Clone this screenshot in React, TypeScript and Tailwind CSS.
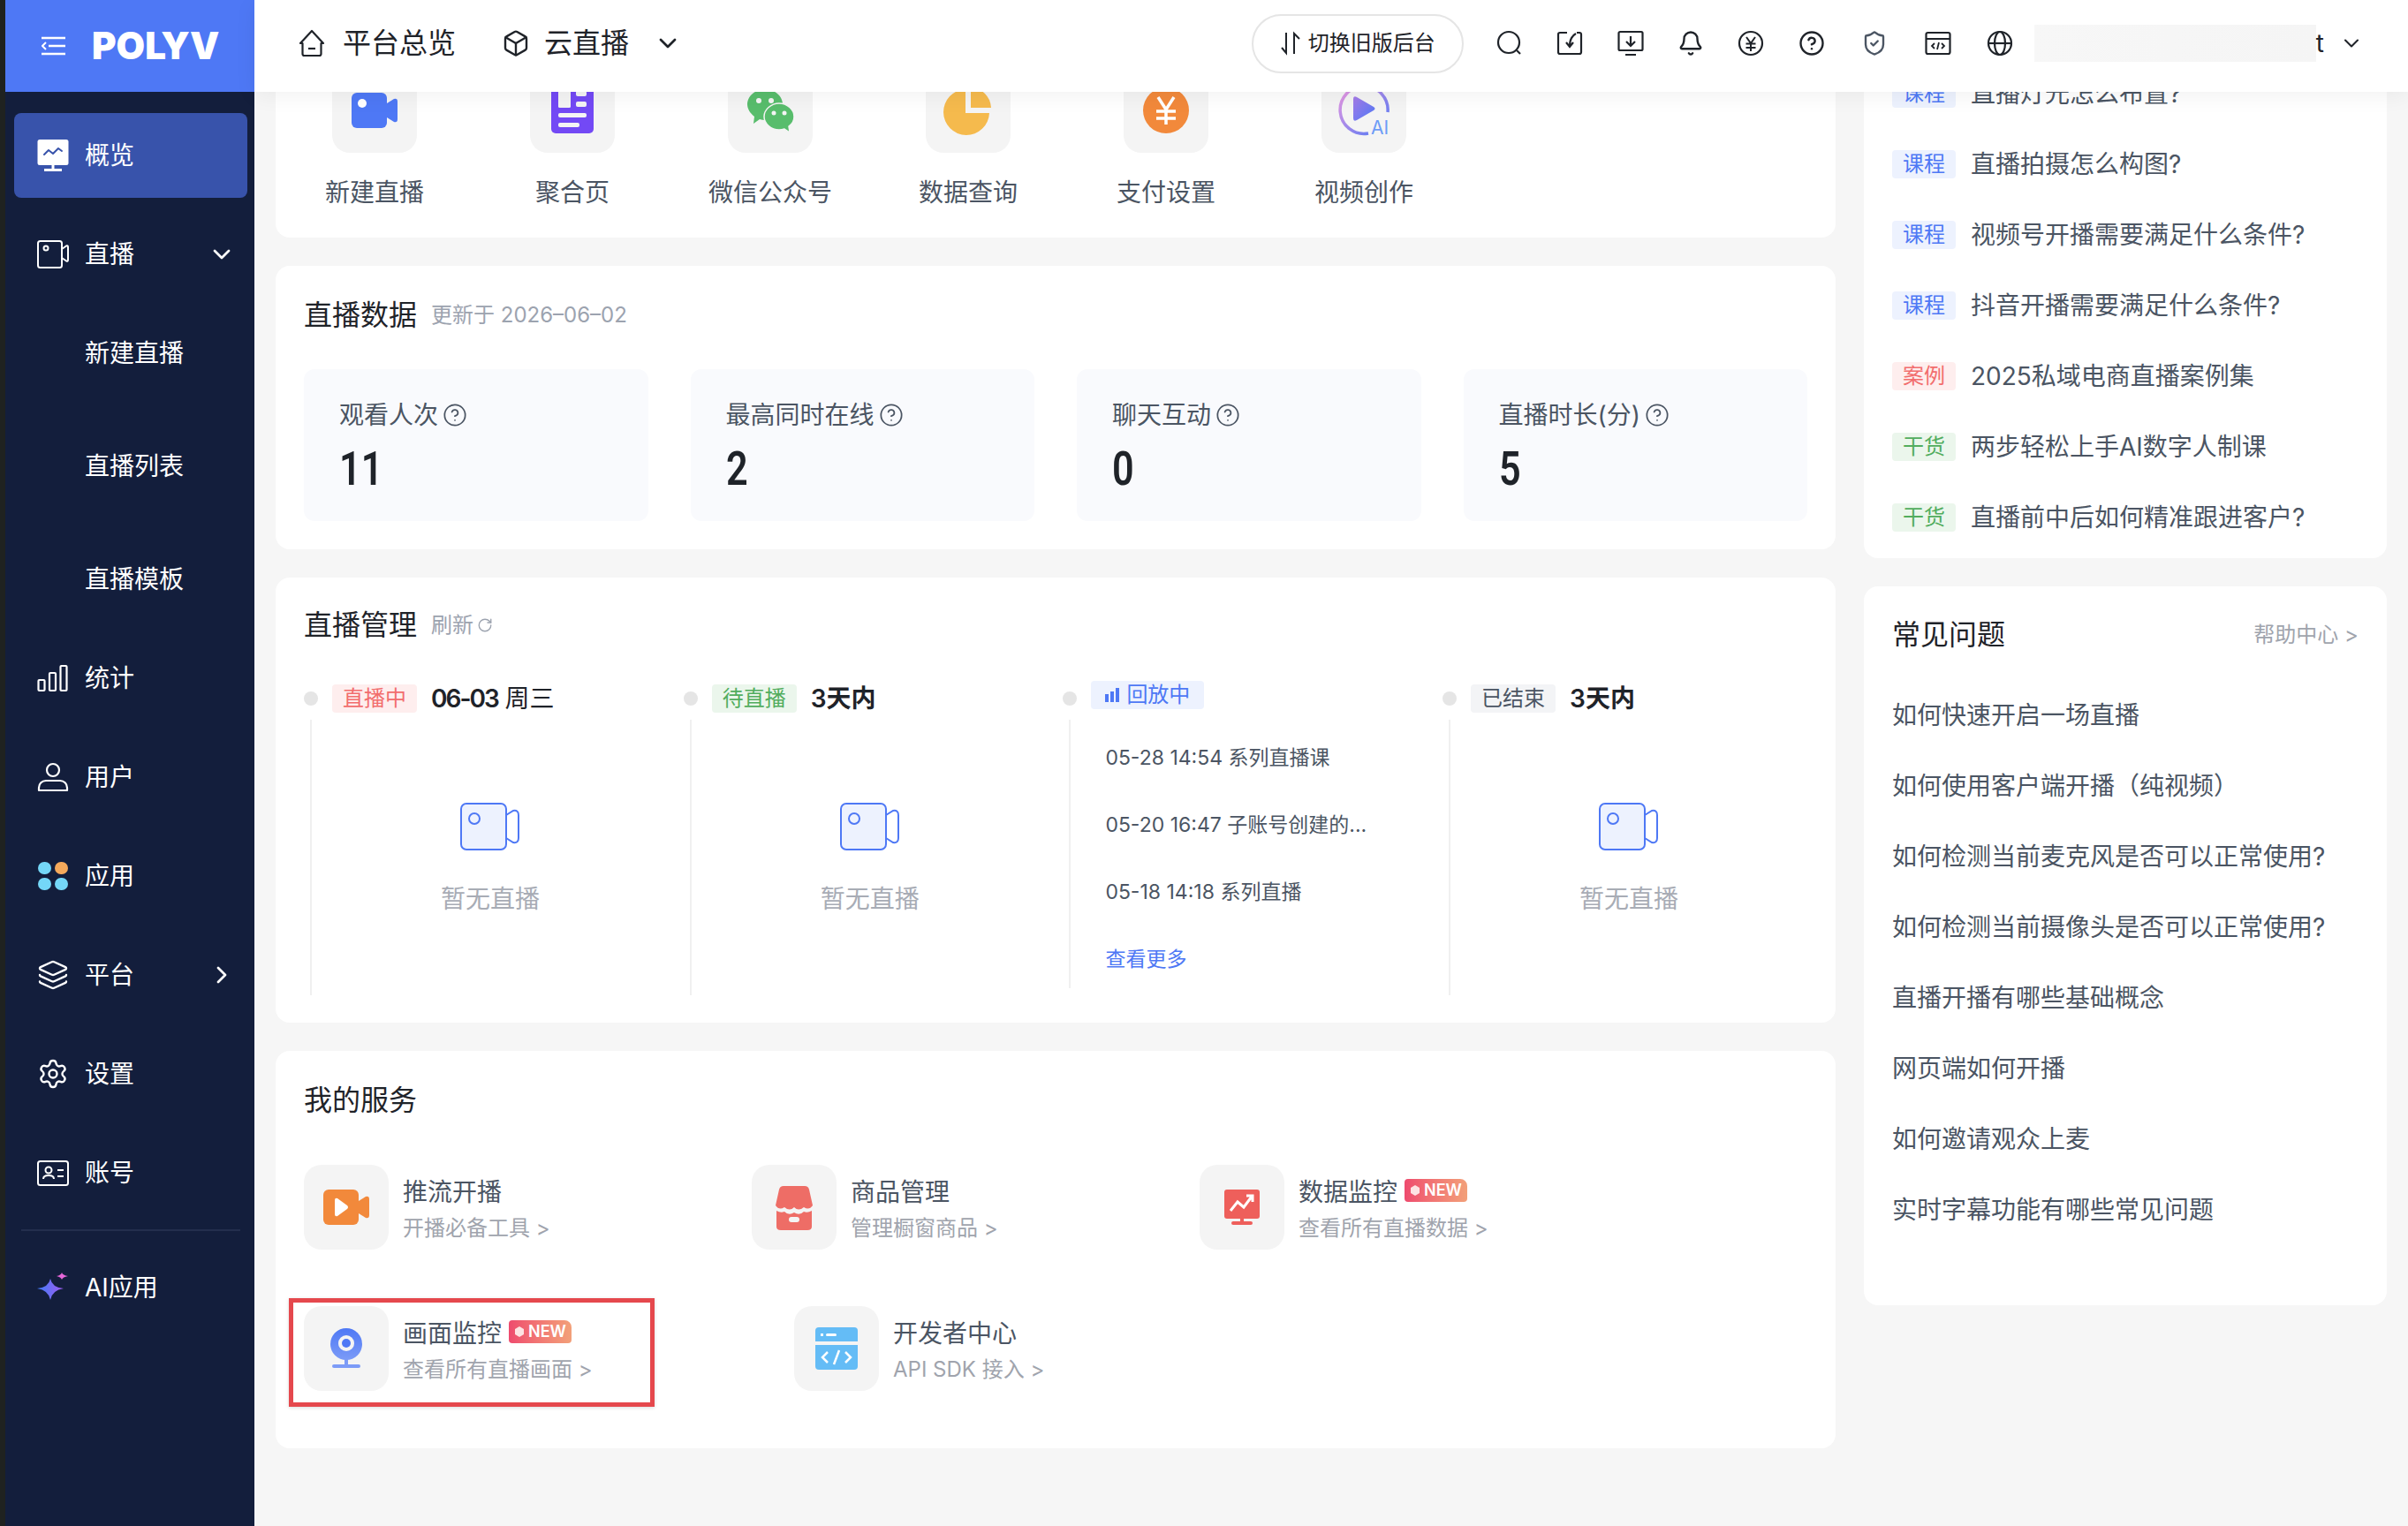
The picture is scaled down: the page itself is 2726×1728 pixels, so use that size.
import type { ReactNode } from "react";
import { Box, Bell, ChevronDown, ChevronRight, CircleHelp, Layers, Settings, ShieldCheck, RotateCw } from "lucide-react";

const sideIconClass = "w-9 h-9 shrink-0";

function Overview() {
  return (
    <svg viewBox="0 0 36 36" className={sideIconClass}>
      <rect x="0.5" y="0" width="35" height="29" rx="2.5" fill="#fff" />
      <path d="M8 17l5-5 5 4 6-6 4 3" fill="none" stroke="#3853ab" strokeWidth="2" strokeLinecap="round" strokeLinejoin="round" />
      <rect x="16.5" y="28" width="3" height="6" fill="#fff" />
      <rect x="8" y="33" width="20" height="3" fill="#fff" />
    </svg>
  );
}

function LiveCam() {
  return (
    <svg viewBox="0 0 36 36" className={sideIconClass} fill="none" stroke="#fff" strokeWidth="2">
      <rect x="1" y="3" width="27" height="30" rx="2.5" />
      <circle cx="10" cy="11" r="2.5" />
      <path d="M28 12l5-3.500q2-1 2 1.500v14q0 2.500-2 1.500l-5-3.500" />
    </svg>
  );
}

function Stats() {
  return (
    <svg viewBox="0 0 36 36" className={sideIconClass} fill="none" stroke="#fff" strokeWidth="2.2">
      <rect x="1.5" y="20" width="7" height="12" rx="1" />
      <rect x="14" y="12" width="7" height="20" rx="1" />
      <rect x="26.5" y="4" width="7" height="28" rx="1" />
    </svg>
  );
}

function UserIcon() {
  return (
    <svg viewBox="0 0 36 36" className={sideIconClass} fill="none" stroke="#fff" strokeWidth="2.2">
      <circle cx="18" cy="10" r="7" />
      <path d="M2 33v-3a8 8 0 0 1 8-8h16a8 8 0 0 1 8 8v3z" strokeLinejoin="round" />
    </svg>
  );
}

function Apps() {
  return (
    <svg viewBox="0 0 36 36" className={sideIconClass}>
      <rect x="1" y="2" width="15" height="14" rx="7" fill="#74d7f7" />
      <rect x="20" y="2" width="15" height="14" rx="7" fill="#f5a95b" />
      <rect x="1" y="20" width="15" height="14" rx="7" fill="#74d7f7" />
      <rect x="20" y="20" width="15" height="14" rx="7" fill="#74d7f7" />
    </svg>
  );
}

function Account() {
  return (
    <svg viewBox="0 0 36 36" className={sideIconClass} fill="none" stroke="#fff" strokeWidth="2">
      <rect x="1" y="5" width="34" height="27" rx="2.5" />
      <circle cx="13" cy="15" r="3.5" />
      <path d="M7 25q0-4 6-4t6 4" />
      <path d="M23 15h7M23 22h7" />
    </svg>
  );
}

function Sparkle() {
  return (
    <svg viewBox="0 0 36 36" className={sideIconClass}>
      <defs>
        <linearGradient id="spark" x1="0" y1="0" x2="1" y2="0">
          <stop offset="0" stopColor="#3f7cf6" />
          <stop offset="1" stopColor="#a15cf2" />
        </linearGradient>
      </defs>
      <path d="M15 8q2 10 15 11q-13 2-15 13q-2-11-15-13q13-1 15-11z" fill="url(#spark)" />
      <path d="M28 1q1 3 7 4q-6 1-7 4q-1-3-6-4q5-1 6-4z" fill="#e667d9" />
    </svg>
  );
}

function SideItem({ icon, label, active, right, className }: { icon?: ReactNode; label: string; active?: boolean; right?: ReactNode; className?: string }) {
  return (
    <div className={`ml-[10px] mr-2 flex h-24 items-center gap-[18px] rounded-lg pl-[26px] pr-[13px] text-[28px] leading-10 text-white ${active ? "bg-[#3853ab]" : ""} ${className ?? ""}`}>
      {icon}
      <span className="flex-1">{label}</span>
      {right}
    </div>
  );
}

function Sidebar() {
  return (
    <aside className="flex w-[282px] shrink-0 flex-col bg-[#131e3c]">
      <div className="flex h-[104px] shrink-0 items-center bg-[#4e78f5] pl-[41px]">
        <svg viewBox="0 0 28 22" className="h-[22px] w-[28px]" fill="none" stroke="#fff" strokeWidth="2.4">
          <path d="M0 2h27M8 11h19M0 20h27" />
          <path d="M5 7l-4 4 4 4" strokeWidth="2" />
        </svg>
        <span className="relative ml-[29px] text-[42px] leading-none font-black text-white">
          POLYV
          <svg viewBox="0 0 8 10" className="absolute top-[16px] left-[40px] h-[10px] w-2" fill="#4e78f5">
            <path d="M0 0l8 5-8 5z" />
          </svg>
        </span>
      </div>
      <div className="flex flex-col pt-6">
        <SideItem icon={<Overview />} label="概览" active className="mb-4" />
        <SideItem icon={<LiveCam />} label="直播" right={<ChevronDown className="h-8 w-8" strokeWidth={2} />} />
        {["新建直播", "直播列表", "直播模板"].map((t) => (
          <div key={t} className="flex h-32 items-center pl-[90px] text-[28px] leading-10 text-white">{t}</div>
        ))}
        <SideItem icon={<Stats />} label="统计" className="mb-4" />
        <SideItem icon={<UserIcon />} label="用户" className="mb-4" />
        <SideItem icon={<Apps />} label="应用" className="mb-4" />
        <SideItem icon={<Layers className={sideIconClass} strokeWidth={1.6} />} label="平台" right={<ChevronRight className="h-8 w-8" strokeWidth={2} />} className="mb-4" />
        <SideItem icon={<Settings className={sideIconClass} strokeWidth={1.6} />} label="设置" className="mb-4" />
        <SideItem icon={<Account />} label="账号" className="mb-4" />
        <div className="mr-4 ml-[18px] h-0.5 bg-[#232e4d]" />
        <SideItem icon={<Sparkle />} label="AI应用" className="mt-4" />
      </div>
    </aside>
  );
}

const topIcon = "h-[30px] w-[30px] text-[#1f2329]";

const topIcons: { w: string; node: ReactNode }[] = [
  {
    w: "w-[68px]",
    node: (
      <svg viewBox="0 0 30 30" className={topIcon} fill="none" stroke="currentColor" strokeWidth="2.2">
        <circle cx="14" cy="14" r="12" />
        <path d="M23 23l4 4" />
      </svg>
    ),
  },
  {
    w: "w-[69px]",
    node: (
      <svg viewBox="0 0 30 30" className={topIcon} fill="none" stroke="currentColor" strokeWidth="2.2">
        <path d="M12 3H4a2 2 0 0 0-2 2v20a2 2 0 0 0 2 2h22a2 2 0 0 0 2-2V5a2 2 0 0 0-2-2h-3" />
        <path d="M22 4q-7 4-7 14M11 14l4 5 4-5" />
      </svg>
    ),
  },
  {
    w: "w-[68px]",
    node: (
      <svg viewBox="0 0 30 30" className={topIcon} fill="none" stroke="currentColor" strokeWidth="2.2">
        <rect x="1.5" y="2" width="27" height="21" rx="1.5" />
        <path d="M15 7v11M10 13l5 5 5-5M9 28h12" />
      </svg>
    ),
  },
  { w: "w-[68px]", node: <Bell className={topIcon} strokeWidth={1.9} /> },
  {
    w: "w-[68px]",
    node: (
      <svg viewBox="0 0 30 30" className={topIcon} fill="none" stroke="currentColor" strokeWidth="2.2">
        <circle cx="15" cy="15" r="13" />
        <path d="M10 8l5 7 5-7M9.500 15.500h11M9.500 20h11M15 15v9" strokeWidth="2" />
      </svg>
    ),
  },
  { w: "w-[70px]", node: <CircleHelp className={topIcon} strokeWidth={1.9} /> },
  { w: "w-[73px]", node: <ShieldCheck className="h-[30px] w-[30px] text-[#4b5563]" strokeWidth={1.9} /> },
  {
    w: "w-[71px]",
    node: (
      <svg viewBox="0 0 30 30" className={topIcon} fill="none" stroke="currentColor" strokeWidth="2.2">
        <rect x="1.5" y="3" width="27" height="24" rx="2" />
        <path d="M1.500 10h27M11 15l-3 3 3 3M19 15l3 3-3 3M16 14l-2 8" strokeWidth="1.800" />
      </svg>
    ),
  },
  {
    w: "w-[68px]",
    node: (
      <svg viewBox="0 0 30 30" className={topIcon} fill="none" stroke="currentColor" strokeWidth="2.2">
        <circle cx="15" cy="15" r="13" />
        <ellipse cx="15" cy="15" rx="6" ry="13" />
        <path d="M2 15h26" />
      </svg>
    ),
  },
];

function HomeIcon() {
  return (
    <svg viewBox="0 0 30 32" className="h-8 w-[30px]" fill="none" stroke="#1f2329" strokeWidth="2.2" strokeLinejoin="round">
      <path d="M2 16L15 2l13 14h-2.500v12a2 2 0 0 1-2 2h-17a2 2 0 0 1-2-2V16z" />
      <path d="M11 22h8" />
    </svg>
  );
}

function Topbar() {
  return (
    <header className="relative z-10 flex h-[104px] shrink-0 items-center bg-white pb-[6px] pl-[50px] text-[#1f2329] shadow-[0_4px_24px_rgba(0,0,0,0.06)]">
      <HomeIcon />
      <span className="ml-5 text-[32px] leading-10">平台总览</span>
      <Box className="ml-[52px] h-[32px] w-[32px]" strokeWidth={1.8} />
      <span className="ml-4 text-[32px] leading-10">云直播</span>
      <ChevronDown className="ml-7 h-8 w-8" strokeWidth={2} />
      <div className="ml-auto flex h-[67px] w-[240px] items-center justify-center gap-2 rounded-full border-2 border-[#e5e5e5] text-2xl">
        <svg viewBox="0 0 24 30" className="h-[30px] w-6" fill="none" stroke="#1f2329" strokeWidth="2">
          <path d="M7 3v23l-5-6M16 27V4l6 6" />
        </svg>
        切换旧版后台
      </div>
      <div className="ml-[18px] flex items-center">
        {topIcons.map((it, i) => (
          <div key={i} className={`flex justify-center ${it.w}`}>{it.node}</div>
        ))}
      </div>
      <div className="ml-[5px] h-[42px] w-[319px] bg-gradient-to-r from-[#f7f7f7] to-[#f5f5f5]" />
      <span className="text-[28px] leading-10">t</span>
      <ChevronDown className="mr-[50px] ml-[17px] h-7 w-7" strokeWidth={1.8} />
    </header>
  );
}

const quick: { label: string; icon: ReactNode }[] = [
  {
    label: "新建直播",
    icon: (
      <svg viewBox="0 0 56 56" className="h-14 w-14">
        <rect x="2" y="8" width="40" height="40" rx="6" fill="#4e78f5" />
        <circle cx="14" cy="20" r="5" fill="#fff" />
        <path d="M42 20l8-5q4-1 4 3v20q0 4-4 3l-8-5z" fill="#4e78f5" />
      </svg>
    ),
  },
  {
    label: "聚合页",
    icon: (
      <svg viewBox="0 0 56 56" className="h-14 w-14">
        <rect x="4" y="2" width="48" height="52" rx="5" fill="#7349f5" />
        <rect x="12" y="6" width="14" height="19" rx="1.5" fill="#f4f4f4" />
        <rect x="32" y="6" width="12" height="6" rx="2" fill="#f4f4f4" />
        <rect x="32" y="18" width="12" height="6" rx="2" fill="#f4f4f4" />
        <rect x="12" y="31" width="32" height="5" rx="2" fill="#f4f4f4" />
        <rect x="12" y="42" width="24" height="5" rx="2" fill="#f4f4f4" />
      </svg>
    ),
  },
  {
    label: "微信公众号",
    icon: (
      <svg viewBox="0 0 56 56" className="h-14 w-14">
        <path d="M22 4c11 0 20 8 20 17s-9 18-20 18q-3 0-6-1l-7 5 1-8C5 31 2 26 2 21 2 12 11 4 22 4z" fill="#58bd6c" />
        <circle cx="15" cy="17" r="3" fill="#f4f4f4" />
        <circle cx="29" cy="17" r="3" fill="#f4f4f4" />
        <path d="M38 20c9 0 17 7 17 15 0 5-3 9-6 11l1 7-6-4q-3 1-6 1c-9 0-17-7-17-15s8-15 17-15z" fill="#58bd6c" stroke="#f4f4f4" strokeWidth="1.500" />
        <circle cx="32" cy="31" r="2.500" fill="#f4f4f4" />
        <circle cx="44" cy="31" r="2.500" fill="#f4f4f4" />
      </svg>
    ),
  },
  {
    label: "数据查询",
    icon: (
      <svg viewBox="0 0 56 56" className="h-14 w-14">
        <path d="M25 4v27h27a26 26 0 1 1-27-27z" fill="#f5ba4d" />
        <path d="M31 2a24 24 0 0 1 23 23H31z" fill="#f5ba4d" />
      </svg>
    ),
  },
  {
    label: "支付设置",
    icon: (
      <svg viewBox="0 0 56 56" className="h-14 w-14">
        <circle cx="28" cy="28" r="26" fill="#f2893b" />
        <path d="M19 13l9 14 9-14M17 29h22M17 37h22M28 27v17" fill="none" stroke="#fff" strokeWidth="3.500" />
      </svg>
    ),
  },
  {
    label: "视频创作",
    icon: (
      <svg viewBox="0 0 60 60" className="h-[60px] w-[60px]">
        <defs>
          <linearGradient id="ring" x1="0" y1="0" x2="1" y2="1">
            <stop offset="0" stopColor="#ee98e0" />
            <stop offset="1" stopColor="#4e78f5" />
          </linearGradient>
          <linearGradient id="play" x1="0" y1="0" x2="1" y2="1">
            <stop offset="0" stopColor="#a77be8" />
            <stop offset="1" stopColor="#4e78f5" />
          </linearGradient>
        </defs>
        <path d="M35 56a27 27 0 1 1 22-24" fill="none" stroke="url(#ring)" strokeWidth="3.500" />
        <path d="M18 17q0-4 4-2l19 11q3 2 0 4L22 41q-4 2-4-2z" fill="url(#play)" />
        <text x="38" y="57" fontSize="21" fontFamily="Inter, sans-serif" fill="#6d9cf7">AI</text>
      </svg>
    ),
  },
];

function Card({ className, children }: { className?: string; children: ReactNode }) {
  return <section className={`rounded-2xl bg-white ${className ?? ""}`}>{children}</section>;
}

function Tile({ children }: { children: ReactNode }) {
  return <div className="flex h-24 w-24 shrink-0 items-center justify-center rounded-[20px] bg-[#f4f4f4]">{children}</div>;
}

function QuickCard() {
  return (
    <Card className="flex h-[224px] pt-8">
      {quick.map((q) => (
        <div key={q.label} className="flex w-[224px] flex-col items-center">
          <Tile>{q.icon}</Tile>
          <span className="mt-[25px] text-[28px] leading-10 text-[#4b5563]">{q.label}</span>
        </div>
      ))}
    </Card>
  );
}

const stats = [
  { label: "观看人次", value: "11" },
  { label: "最高同时在线", value: "2" },
  { label: "聊天互动", value: "0" },
  { label: "直播时长(分)", value: "5" },
];

function StatsCard() {
  return (
    <Card className="px-8 pt-9 pb-8">
      <div className="flex items-center gap-4">
        <h2 className="text-[32px] leading-10 font-normal text-[#1f2329]">直播数据</h2>
        <span className="text-2xl leading-8 text-[#9ca3af]">更新于 2026–06–02</span>
      </div>
      <div className="mt-[41px] grid grid-cols-4 gap-12">
        {stats.map((s) => (
          <div key={s.label} className="h-[172px] rounded-xl bg-[#f9fafd] px-10 pt-[32px]">
            <div className="flex items-center gap-[5px] text-[28px] leading-10 text-[#4b5563]">
              {s.label}
              <CircleHelp className="h-7 w-7" strokeWidth={1.5} />
            </div>
            <div className="mt-[9px] origin-left scale-x-[0.8] font-[Roboto,sans-serif] text-[54px] leading-[64px] font-semibold text-[#1f2329]">{s.value}</div>
          </div>
        ))}
      </div>
    </Card>
  );
}

function Empty() {
  return (
    <div className="ml-[7px] flex h-[312px] w-[406px] flex-col items-center border-l-2 border-[#f0f0f0] pt-[94px]">
      <svg viewBox="0 0 68 54" className="h-[54px] w-[68px]">
        <rect x="1" y="1" width="51" height="52" rx="6" fill="#edf2fe" stroke="#4e78f5" strokeWidth="2" />
        <circle cx="16" cy="18" r="6" fill="none" stroke="#4e78f5" strokeWidth="2" />
        <path d="M52 14l8-5q6-1 6 5v26q0 6-6 5l-8-5" fill="none" stroke="#4e78f5" strokeWidth="2" />
      </svg>
      <span className="mt-[35px] text-[28px] leading-10 text-[#a8acb5]">暂无直播</span>
    </div>
  );
}

function ColHead({ badge, children }: { badge: ReactNode; children?: ReactNode }) {
  return (
    <div className="flex h-12 items-center">
      <span className="h-4 w-4 shrink-0 rounded-full bg-[#e5e5e5]" />
      <span className="ml-4 flex items-center">{badge}</span>
      {children}
    </div>
  );
}

const badgeClass = "flex h-8 items-center justify-center rounded text-2xl leading-8";

function ManageCard() {
  return (
    <Card className="px-8 pt-[34px] pb-[31px]">
      <div className="flex items-center gap-4">
        <h2 className="text-[32px] leading-10 font-normal text-[#1f2329]">直播管理</h2>
        <span className="flex items-center gap-1 text-2xl leading-8 text-[#9ca3af]">
          刷新 <RotateCw className="h-[18px] w-[18px]" strokeWidth={1.8} />
        </span>
      </div>
      <div className="mt-[39px] flex">
        <div className="w-[429.7px] shrink-0">
          <ColHead badge={<span className={`${badgeClass} bg-[#feeeee] px-3 text-[#f26d6d]`}>直播中</span>}>
            <span className="ml-4 text-[28px] leading-8 text-[#1f2329]"><b className="font-semibold tracking-[-2px]">06-03</b> 周三</span>
          </ColHead>
          <Empty />
        </div>
        <div className="w-[429.7px] shrink-0">
          <ColHead badge={<span className={`${badgeClass} bg-[#ebf6ec] px-3 text-[#52ad5e]`}>待直播</span>}>
            <span className="ml-4 text-[28px] leading-8 font-semibold text-[#1f2329]">3天内</span>
          </ColHead>
          <Empty />
        </div>
        <div className="w-[429.7px] shrink-0">
          <ColHead
            badge={
              <span className={`${badgeClass} mb-2 gap-2 bg-[#edf2fe] px-4 text-[#4e78f5]`}>
                <svg viewBox="0 0 16 16" className="h-4 w-4" fill="#4e78f5">
                  <rect x="0" y="7" width="4" height="9" />
                  <rect x="6" y="4" width="4" height="12" />
                  <rect x="12" y="0" width="4" height="16" />
                </svg>
                回放中
              </span>
            }
          />
          <div className="ml-[7px] flex h-[304px] flex-col gap-11 border-l-2 border-[#f0f0f0] pt-[27px] pl-[39px] text-[23px] leading-8 text-[#4b5563]">
            <span>05-28 14:54 系列直播课</span>
            <span>05-20 16:47 子账号创建的...</span>
            <span>05-18 14:18 系列直播</span>
            <span className="text-[#4e78f5]">查看更多</span>
          </div>
        </div>
        <div className="w-[429.7px] shrink-0">
          <ColHead badge={<span className={`${badgeClass} bg-[#f3f4f6] px-3 text-[#4b5563]`}>已结束</span>}>
            <span className="ml-4 text-[28px] leading-8 font-semibold text-[#1f2329]">3天内</span>
          </ColHead>
          <Empty />
        </div>
      </div>
    </Card>
  );
}

function NewBadge() {
  return (
    <span className="flex h-[26px] w-[71px] -translate-y-[2px] items-center justify-center gap-1 rounded-[4px] rounded-tr-lg bg-gradient-to-r from-[#ee4a6e] to-[#f2a079] text-[18px] leading-none font-semibold text-white">
      <svg viewBox="0 0 12 12" className="h-3 w-3" fill="#fde3e3"><path d="M6 0l5 3v6l-5 3-5-3V3z" /></svg>
      NEW
    </span>
  );
}

function Service({ icon, title, sub, isNew, className }: { icon: ReactNode; title: string; sub: string; isNew?: boolean; className: string }) {
  return (
    <div className={`flex shrink-0 ${className}`}>
      <Tile>{icon}</Tile>
      <div className="ml-4 flex flex-col justify-center gap-[5px] pt-[3px]">
        <div className="flex items-center gap-2 text-[28px] leading-10 text-[#4b5563]">
          {title}
          {isNew && <NewBadge />}
        </div>
        <div className="text-2xl leading-8 text-[#a0a4ad]">{sub} &gt;</div>
      </div>
    </div>
  );
}

function ServiceCard() {
  return (
    <Card className="relative h-[450px] px-8 pt-9">
      <h2 className="text-[32px] leading-10 font-normal text-[#1f2329]">我的服务</h2>
      <div className="mt-[53px] flex">
        <Service
          className="w-[507px]"
          title="推流开播"
          sub="开播必备工具"
          icon={
            <svg viewBox="0 0 56 56" className="h-14 w-14">
              <rect x="2" y="8" width="40" height="40" rx="6" fill="#f2893b" />
              <path d="M15 20q0-3 3-2l11 8q2 2 0 4l-11 8q-3 1-3-2z" fill="#fff" />
              <path d="M42 21l8-5q4-1 4 3v18q0 4-4 3l-8-5z" fill="#f2893b" />
            </svg>
          }
        />
        <Service
          className="w-[507px]"
          title="商品管理"
          sub="管理橱窗商品"
          icon={
            <svg viewBox="0 0 56 56" className="h-14 w-14">
              <path d="M7 26L11 8q1-4 5-4h24q4 0 5 4l4 18q-4 6-10 2-6 5-11 0-5 5-11 0-6 4-10-2z" fill="#ee6d66" />
              <path d="M8 32q5 3 9 1 5 5 11 1 6 4 11-1 4 2 9-1v18q0 4-5 4H13q-5 0-5-4z" fill="#ee6d66" />
              <rect x="22" y="39" width="12" height="6" rx="3" fill="#f4f4f4" />
            </svg>
          }
        />
        <Service
          className=""
          isNew
          title="数据监控"
          sub="查看所有直播数据"
          icon={
            <svg viewBox="0 0 56 56" className="h-14 w-14">
              <rect x="8" y="8" width="40" height="33" rx="3" fill="#ee5f5b" />
              <rect x="26" y="40" width="4" height="6" fill="#ee5f5b" />
              <rect x="16" y="44" width="24" height="4" rx="2" fill="#ee5f5b" />
              <path d="M15 32l8-10 7 6 9-12M33 15h7v7" fill="none" stroke="#fff" strokeWidth="3" />
            </svg>
          }
        />
      </div>
      <div className="mt-16 flex">
        <Service
          className="w-[555px]"
          isNew
          title="画面监控"
          sub="查看所有直播画面"
          icon={
            <svg viewBox="0 0 56 56" className="h-14 w-14">
              <defs>
                <linearGradient id="cam" x1="0" y1="0" x2="0" y2="1">
                  <stop offset="0" stopColor="#4e78f5" />
                  <stop offset="1" stopColor="#7c9bf7" />
                </linearGradient>
              </defs>
              <circle cx="28" cy="23" r="18" fill="url(#cam)" />
              <circle cx="28" cy="22" r="9" fill="#f4f4f4" />
              <circle cx="28" cy="22" r="5" fill="#4e78f5" />
              <rect x="26" y="40" width="4" height="7" fill="#7c9bf7" />
              <rect x="12" y="46" width="32" height="4" rx="2" fill="#7c9bf7" />
            </svg>
          }
        />
        <Service
          className=""
          title="开发者中心"
          sub="API SDK 接入"
          icon={
            <svg viewBox="0 0 56 56" className="h-14 w-14">
              <path d="M4 8q0-4 4-4h40q4 0 4 4v12H4z" fill="#64bcf6" />
              <path d="M4 24h48v24q0 4-4 4H8q-4 0-4-4z" fill="#64bcf6" />
              <rect x="10" y="11" width="3" height="3" fill="#fff" />
              <rect x="16" y="11" width="12" height="3" rx="1.500" fill="#fff" />
              <path d="M18 32l-6 6 6 6M38 32l6 6-6 6M31 30l-6 16" fill="none" stroke="#fff" strokeWidth="2.500" />
            </svg>
          }
        />
      </div>
      {/* red mark over the 画面监控 entry */}
      <div className="absolute top-[280px] left-[15px] h-[123px] w-[414px] border-[5px] border-[#e5484d] shadow-[0_1px_4px_rgba(0,0,0,0.15)]" />
    </Card>
  );
}

const articles: { tag: "课程" | "案例" | "干货"; text: string }[] = [
  { tag: "课程", text: "直播灯光怎么布置?" },
  { tag: "课程", text: "直播拍摄怎么构图?" },
  { tag: "课程", text: "视频号开播需要满足什么条件?" },
  { tag: "课程", text: "抖音开播需要满足什么条件?" },
  { tag: "案例", text: "2025私域电商直播案例集" },
  { tag: "干货", text: "两步轻松上手AI数字人制课" },
  { tag: "干货", text: "直播前中后如何精准跟进客户?" },
];

const tagClass = {
  课程: "bg-[#edf2fe] text-[#4e78f5]",
  案例: "bg-[#feeeee] text-[#f26d6d]",
  干货: "bg-[#ebf6ec] text-[#52ad5e]",
};

const faqs = [
  "如何快速开启一场直播",
  "如何使用客户端开播（纯视频）",
  "如何检测当前麦克风是否可以正常使用?",
  "如何检测当前摄像头是否可以正常使用?",
  "直播开播有哪些基础概念",
  "网页端如何开播",
  "如何邀请观众上麦",
  "实时字幕功能有哪些常见问题",
];

function RightColumn() {
  return (
    <div className="flex w-[592px] shrink-0 flex-col gap-8">
      <Card className="flex h-[587px] flex-col gap-12 px-8 pt-[45px]">
        {articles.map((a) => (
          <div key={a.text} className="flex h-8 items-center gap-[17px]">
            <span className={`flex h-8 w-[72px] items-center justify-center rounded text-2xl leading-8 ${tagClass[a.tag]}`}>{a.tag}</span>
            <span className="text-[28px] leading-10 text-[#4b5563]">{a.text}</span>
          </div>
        ))}
      </Card>
      <Card className="h-[814px] px-8 pt-[35px]">
        <div className="flex items-center justify-between">
          <h2 className="text-[32px] leading-10 font-normal text-[#1f2329]">常见问题</h2>
          <span className="text-2xl leading-8 text-[#a0a4ad]">帮助中心 &gt;</span>
        </div>
        <div className="mt-[51px] flex flex-col gap-10 text-[28px] leading-10 text-[#4b5563]">
          {faqs.map((f) => (
            <span key={f}>{f}</span>
          ))}
        </div>
      </Card>
    </div>
  );
}

export default function App() {
  return (
    <div className="flex h-[1728px] w-[2726px] overflow-hidden bg-[#f6f6f6] font-[Inter,'Noto_Sans_CJK_SC',sans-serif]">
      <div className="w-[6px] shrink-0 bg-[#1f2220]" />
      <Sidebar />
      <div className="flex min-w-0 flex-1 flex-col">
        <Topbar />
        <main className="flex-1 overflow-hidden">
          {/* page is scrolled down a bit, top of first row sits under the header */}
          <div className="-mt-[59px] flex gap-8 px-6">
            <div className="flex w-[1766px] shrink-0 flex-col gap-8">
              <QuickCard />
              <StatsCard />
              <ManageCard />
              <ServiceCard />
            </div>
            <RightColumn />
          </div>
        </main>
      </div>
    </div>
  );
}
